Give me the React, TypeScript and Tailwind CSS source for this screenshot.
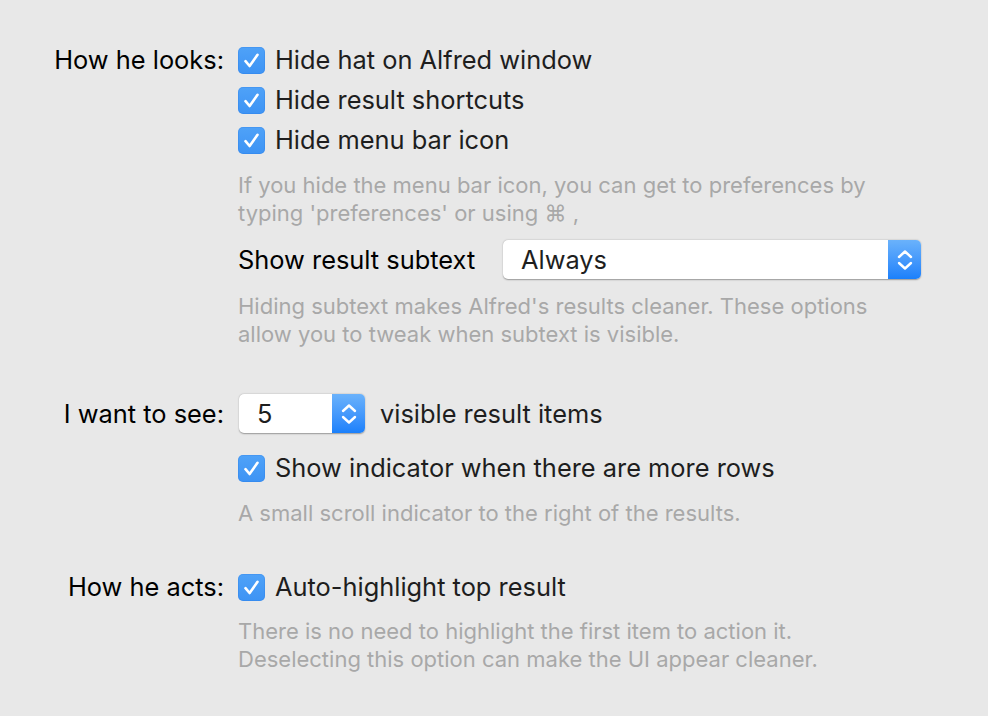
import React from "react";

function Check() {
  return (
    <span className="flex h-[27px] w-[27px] shrink-0 items-center justify-center rounded-[5px] bg-gradient-to-b from-[#4fa2f8] to-[#3d93f4] shadow-[inset_0_0_0_1px_rgba(30,110,220,0.2)]">
      <svg width="27" height="27" viewBox="0 0 27 27" fill="none">
        <path d="M7.5 14.2 L11.6 19 L19.5 7.8" stroke="white" strokeWidth="2.6" strokeLinecap="round" strokeLinejoin="round" />
      </svg>
    </span>
  );
}

function Arrows() {
  return (
    <span className="flex h-full w-[33px] shrink-0 items-center justify-center rounded-r-[5px] bg-gradient-to-b from-[#6ab2fb] to-[#1a80fb]">
      <svg width="18" height="26" viewBox="0 0 18 26" fill="none">
        <path d="M3 10 L9 4.5 L15 10" stroke="white" strokeWidth="2.4" strokeLinecap="round" strokeLinejoin="round" />
        <path d="M3 16 L9 21.5 L15 16" stroke="white" strokeWidth="2.4" strokeLinecap="round" strokeLinejoin="round" />
      </svg>
    </span>
  );
}

function CheckRow({ label, text }: { label?: string; text: string }) {
  return (
    <div className="flex h-[40px] items-center">
      <div className="w-[224px] shrink-0 text-right text-black">{label}</div>
      <div className="ml-[14px] flex items-center gap-[10px] text-[#1e1e1e]">
        <Check />
        <span>{text}</span>
      </div>
    </div>
  );
}

function Help({ lines, className = "" }: { lines: string[]; className?: string }) {
  return (
    <div className={`pl-[238px] text-[22px] leading-[28px] text-[#a8a8a8] ${className}`}>
      {lines.map((l) => (
        <div key={l}>{l}</div>
      ))}
    </div>
  );
}

export default function App() {
  return (
    <div
      className="h-[716px] w-[988px] overflow-hidden bg-[#e8e8e8] pt-[40px] text-[25.4px] leading-[30px]"
      style={{ fontFamily: "Inter, 'Liberation Sans', sans-serif" }}
    >
      <CheckRow label="How he looks:" text="Hide hat on Alfred window" />
      <CheckRow text="Hide result shortcuts" />
      <CheckRow text="Hide menu bar icon" />
      <Help
        className="mt-[11px]"
        lines={[
          "If you hide the menu bar icon, you can get to preferences by",
          "typing 'preferences' or using \u2318 ,",
        ]}
      />

      <div className="mt-[13px] flex h-[39px] items-center pl-[238px]">
        <span className="w-[265px] shrink-0 text-black">Show result subtext</span>
        <div className="flex h-[39px] w-[418px] items-center rounded-[5px] bg-white shadow-[0_0.5px_1.5px_rgba(0,0,0,0.35)]">
          <span className="flex-1 pl-[18px] text-[#1e1e1e]">Always</span>
          <Arrows />
        </div>
      </div>
      <Help
        className="mt-[13px]"
        lines={[
          "Hiding subtext makes Alfred's results cleaner. These options",
          "allow you to tweak when subtext is visible.",
        ]}
      />

      <div className="mt-[46px] flex h-[39px] items-center">
        <div className="w-[224px] shrink-0 text-right text-black">I want to see:</div>
        <div className="ml-[15px] flex h-[39px] w-[126px] items-center rounded-[5px] bg-white shadow-[0_0.5px_1.5px_rgba(0,0,0,0.35)]">
          <span className="flex-1 pl-[18px] text-[#1e1e1e]">5</span>
          <Arrows />
        </div>
        <span className="ml-[15px] text-[#1e1e1e]">visible result items</span>
      </div>
      <div className="mt-[15px]">
        <CheckRow text="Show indicator when there are more rows" />
      </div>
      <Help className="mt-[11px]" lines={["A small scroll indicator to the right of the results."]} />

      <div className="mt-[40px]">
        <CheckRow label="How he acts:" text="Auto-highlight top result" />
      </div>
      <Help
        className="mt-[10px]"
        lines={[
          "There is no need to highlight the first item to action it.",
          "Deselecting this option can make the UI appear cleaner.",
        ]}
      />
    </div>
  );
}
